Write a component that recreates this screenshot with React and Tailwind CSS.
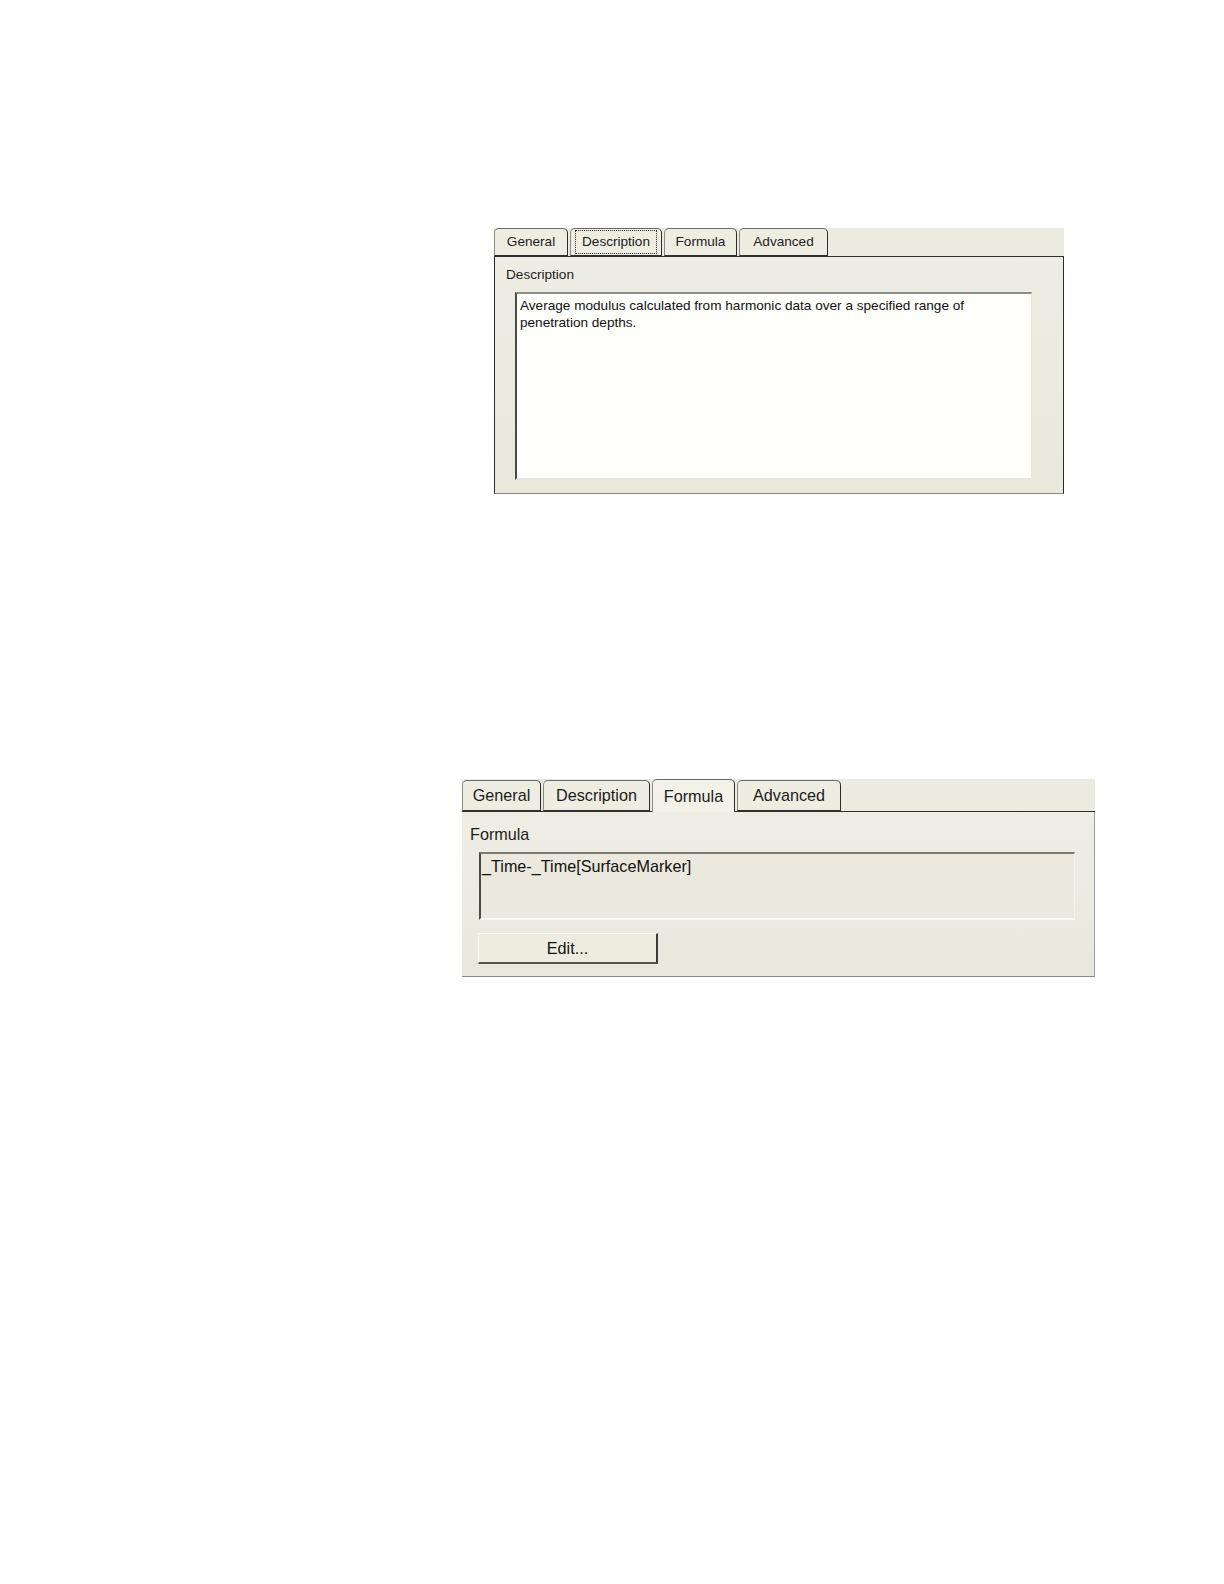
import React from 'react';

const font = { fontFamily: '"Liberation Sans", Arial, sans-serif' };

const Tab = ({ label, selected, focused, width, size, height }) => (
    <div
        className={`flex items-center justify-center rounded-t-[5px] border-t border-r border-l border-t-[#6b6b60] border-r-[#2a2a2a] border-l-[#8a8a80] ${selected ? 'bg-[#f3f2e9] -mb-px relative z-10' : 'bg-[#eeede2] border-b border-b-[#303030]'}`}
        style={{ width, height: selected ? height + 2 : height }}
    >
        <span className={`${size} text-[#1c1c1c] leading-none ${focused ? 'border border-dotted border-[#333] px-[6px] py-[4px]' : ''}`}>
            {label}
        </span>
    </div>
);

const DescriptionPanel = () => (
    <div className="ml-[494px] pt-[228px] w-[570px]" style={font}>
        {/* tab strip */}
        <div className="flex items-end gap-[2px] h-[29px] bg-[#ecebdf] border-b border-[#303030]">
            <Tab label="General" width={74} height={28} size="text-[13.6px]" />
            <Tab label="Description" width={92} height={28} size="text-[13.6px]" focused />
            <Tab label="Formula" width={73} height={28} size="text-[13.6px]" />
            <Tab label="Advanced" width={89} height={28} size="text-[13.6px]" />
        </div>
        <div className="h-[237px] bg-gradient-to-b from-[#eeede3] to-[#e9e8dc] border-l border-r border-b border-l-[#2a2a2a] border-r-[#2a2a2a] border-b-[#8a8a84] pl-[11px] pr-[31px] pt-[11px] flex flex-col">
            <div className="text-[13.6px] text-[#1c1c1c] leading-none mb-[10px]">Description</div>
            <div className="ml-[9px] h-[188px] bg-[#fefefb] border-t-2 border-l-2 border-t-[#8c8c86] border-l-[#4a4a46] border-r border-b-2 border-r-[#e6e5dc] border-b-[#e6e5dc] px-[3px] pt-[3px] text-[13.6px] leading-[17px] text-[#111]">
                Average modulus calculated from harmonic data over a specified range of penetration depths.
            </div>
        </div>
    </div>
);

const FormulaPanel = () => (
    <div className="ml-[462px] mt-[285px] w-[633px]" style={font}>
        <div className="flex items-end gap-[2px] h-[33px] bg-[#ecebdf] border-b border-[#303030]">
            <Tab label="General" width={79} height={31} size="text-[16.2px]" />
            <Tab label="Description" width={107} height={31} size="text-[16.2px]" />
            <Tab label="Formula" width={83} height={31} size="text-[16.2px]" selected />
            <Tab label="Advanced" width={104} height={31} size="text-[16.2px]" />
        </div>
        <div className="h-[165px] bg-gradient-to-b from-[#efeee5] to-[#e9e8dc] border-r border-b border-r-[#a0a09a] border-b-[#8a8a84] pl-[8px] pr-[19px] pt-[14px] flex flex-col">
            <div className="text-[16.2px] text-[#1c1c1c] leading-none mb-[10px]">Formula</div>
            <div className="ml-[9px] h-[68px] bg-[#ebe9dd] border-t-2 border-l-2 border-t-[#7c7c76] border-l-[#4a4a46] border-r border-b-2 border-r-[#f4f3ec] border-b-[#fafaf4] pl-[1px] pt-[2px] text-[16.2px] leading-[20px] text-[#111]">
                _Time-_Time[SurfaceMarker]
            </div>
            <div className="mt-[13px] ml-[8px] w-[180px] h-[31px] bg-[#edecdf] border-t border-l border-t-[#fbfbf6] border-l-[#fbfbf6] border-r-2 border-b-2 border-r-[#3a3a36] border-b-[#55554f] flex items-center justify-center text-[16.2px] text-[#111]">
                Edit...
            </div>
        </div>
    </div>
);

export default function App() {
    return (
        <div className="bg-white flow-root pb-[200px]">
            <DescriptionPanel />
            <FormulaPanel />
        </div>
    );
}
